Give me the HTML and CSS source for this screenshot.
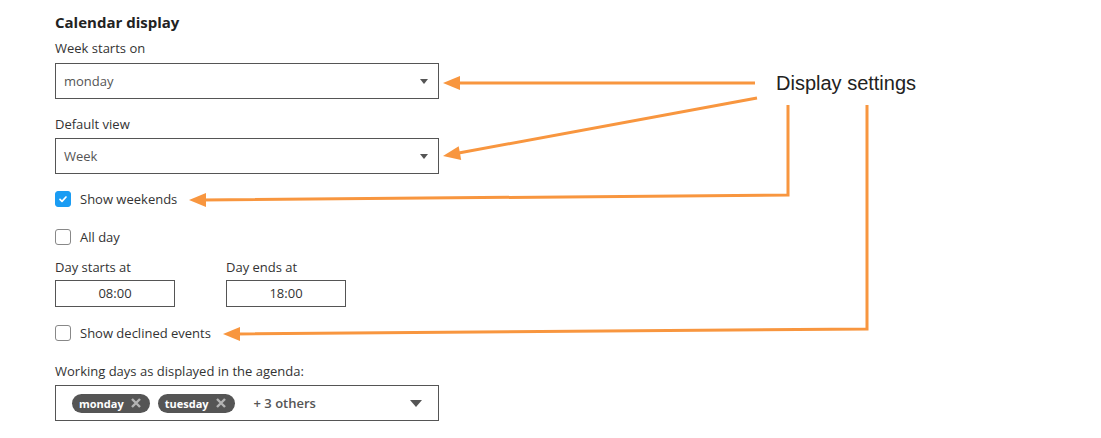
FILE: index.html
```html
<!DOCTYPE html>
<html lang="en">
<head>
  <meta charset="UTF-8" />
  <title>Calendar display</title>
  <link rel="stylesheet" href="styles.css">
</head>
<body>
  <div class="settings">
    <h2 class="section-title">Calendar display</h2>

    <label class="field-label">Week starts on</label>
    <div class="select">
      <span>monday</span>
      <span class="caret"></span>
    </div>

    <label class="field-label second">Default view</label>
    <div class="select">
      <span>Week</span>
      <span class="caret"></span>
    </div>

    <div class="check-row first">
      <span class="box checked">
        <svg viewBox="0 0 16 16" width="16" height="16"><path d="M5 8.3l2 2 4-4.3" fill="none" stroke="#fff" stroke-width="1.7" stroke-linecap="round" stroke-linejoin="round"/></svg>
      </span>
      <span>Show weekends</span>
    </div>

    <div class="check-row">
      <span class="box"></span>
      <span>All day</span>
    </div>

    <div class="time-row">
      <div class="time-field">
        <label class="field-label">Day starts at</label>
        <div class="time-input">08:00</div>
      </div>
      <div class="time-field">
        <label class="field-label">Day ends at</label>
        <div class="time-input">18:00</div>
      </div>
    </div>

    <div class="check-row">
      <span class="box"></span>
      <span>Show declined events</span>
    </div>

    <label class="field-label working">Working days as displayed in the agenda:</label>
    <div class="select multi">
      <div class="chips">
        <span class="chip">monday
          <svg class="chip-x" viewBox="0 0 12 12" width="12" height="12"><path d="M2 2L10 10M10 2L2 10" stroke="#b4b4b4" stroke-width="2.4"/></svg>
        </span>
        <span class="chip">tuesday
          <svg class="chip-x" viewBox="0 0 12 12" width="12" height="12"><path d="M2 2L10 10M10 2L2 10" stroke="#b4b4b4" stroke-width="2.4"/></svg>
        </span>
        <span class="others">+ 3 others</span>
      </div>
      <span class="caret big"></span>
    </div>
  </div>

  <!-- annotation overlay -->
  <div class="note">Display settings</div>
  <svg class="arrows" width="1101" height="438" viewBox="0 0 1101 438">
    <g fill="none" stroke="#f8963f" stroke-width="3">
      <path d="M755 83 L456 83" />
      <path d="M757 98 L456 153.5" />
      <path d="M788 105 L788 195 L202 200" />
      <path d="M867 105 L867 329 L236 334" />
    </g>
    <g fill="#f8963f">
      <path d="M443 83 L460 76 L460 90 Z" />
      <path d="M443 156 L458.7 146.3 L461.2 160.1 Z" />
      <path d="M189 200 L206 193 L206 207 Z" />
      <path d="M223 334 L240 327 L240 341 Z" />
    </g>
  </svg>
</body>
</html>
```

FILE: styles.css
```css
body {
  margin: 0;
  font-family: 'Open Sans', 'Liberation Sans', sans-serif;
  color: #333;
  background: #fff;
}

.settings {
  width: 384px;
  padding: 12px 0 0 55px;
  display: flex;
  flex-direction: column;
}

.section-title {
  margin: 0;
  font-size: 15px;
  line-height: 20px;
  font-weight: 700;
  color: #222;
}

.field-label {
  display: block;
  font-size: 13px;
  line-height: 16px;
  color: #333;
  margin-top: 8px;
  margin-bottom: 7px;
}

.field-label.second {
  margin-top: 17px;
  margin-bottom: 6px;
}

.select {
  box-sizing: border-box;
  height: 36px;
  border: 1px solid #555;
  display: flex;
  align-items: center;
  justify-content: space-between;
  padding: 0 10px 0 8px;
  font-size: 13px;
  color: #555;
}

.caret {
  width: 0;
  height: 0;
  border-left: 4px solid transparent;
  border-right: 4px solid transparent;
  border-top: 5px solid #555;
}

.caret.big {
  border-left-width: 6px;
  border-right-width: 6px;
  border-top-width: 7px;
  margin-right: 2px;
}

.check-row {
  display: flex;
  align-items: center;
  gap: 9px;
  height: 20px;
  margin-top: 18px;
  font-size: 13px;
  color: #333;
}

.check-row.first {
  margin-top: 15px;
}

.box {
  box-sizing: border-box;
  width: 16px;
  height: 16px;
  border: 1px solid #888;
  border-radius: 3px;
  background: #fff;
  display: flex;
}

.box.checked {
  background: #1a9cf3;
  border-color: #1a9cf3;
}

.box svg {
  margin: -1px;
}

.time-row {
  display: flex;
  gap: 51px;
  margin-top: 12px;
}

.time-field .field-label {
  margin: 0 0 5px;
}

.time-input {
  box-sizing: border-box;
  width: 120px;
  height: 27px;
  border: 1px solid #555;
  text-align: center;
  line-height: 25px;
  font-size: 13px;
  color: #333;
}

.time-row + .check-row {
  margin-top: 16px;
}

.field-label.working {
  margin-top: 20px;
  margin-bottom: 6px;
}

.multi {
  padding: 0 14px 0 16px;
}

.chips {
  display: flex;
  align-items: center;
  gap: 8px;
}

.chip {
  display: inline-flex;
  align-items: center;
  gap: 6px;
  height: 19px;
  padding: 0 8px 0 7px;
  border-radius: 10px;
  background: #555;
  color: #fff;
  font-size: 11px;
  font-weight: 700;
}

.chip-x {
  display: block;
}

.others {
  margin-left: 11px;
  font-size: 13px;
  font-weight: 600;
  color: #555;
}

.note {
  position: absolute;
  left: 776px;
  top: 71px;
  font-family: 'Liberation Sans', Arial, sans-serif;
  font-size: 20px;
  line-height: 24px;
  color: #222;
}

.arrows {
  position: absolute;
  left: 0;
  top: 0;
  pointer-events: none;
}
```
